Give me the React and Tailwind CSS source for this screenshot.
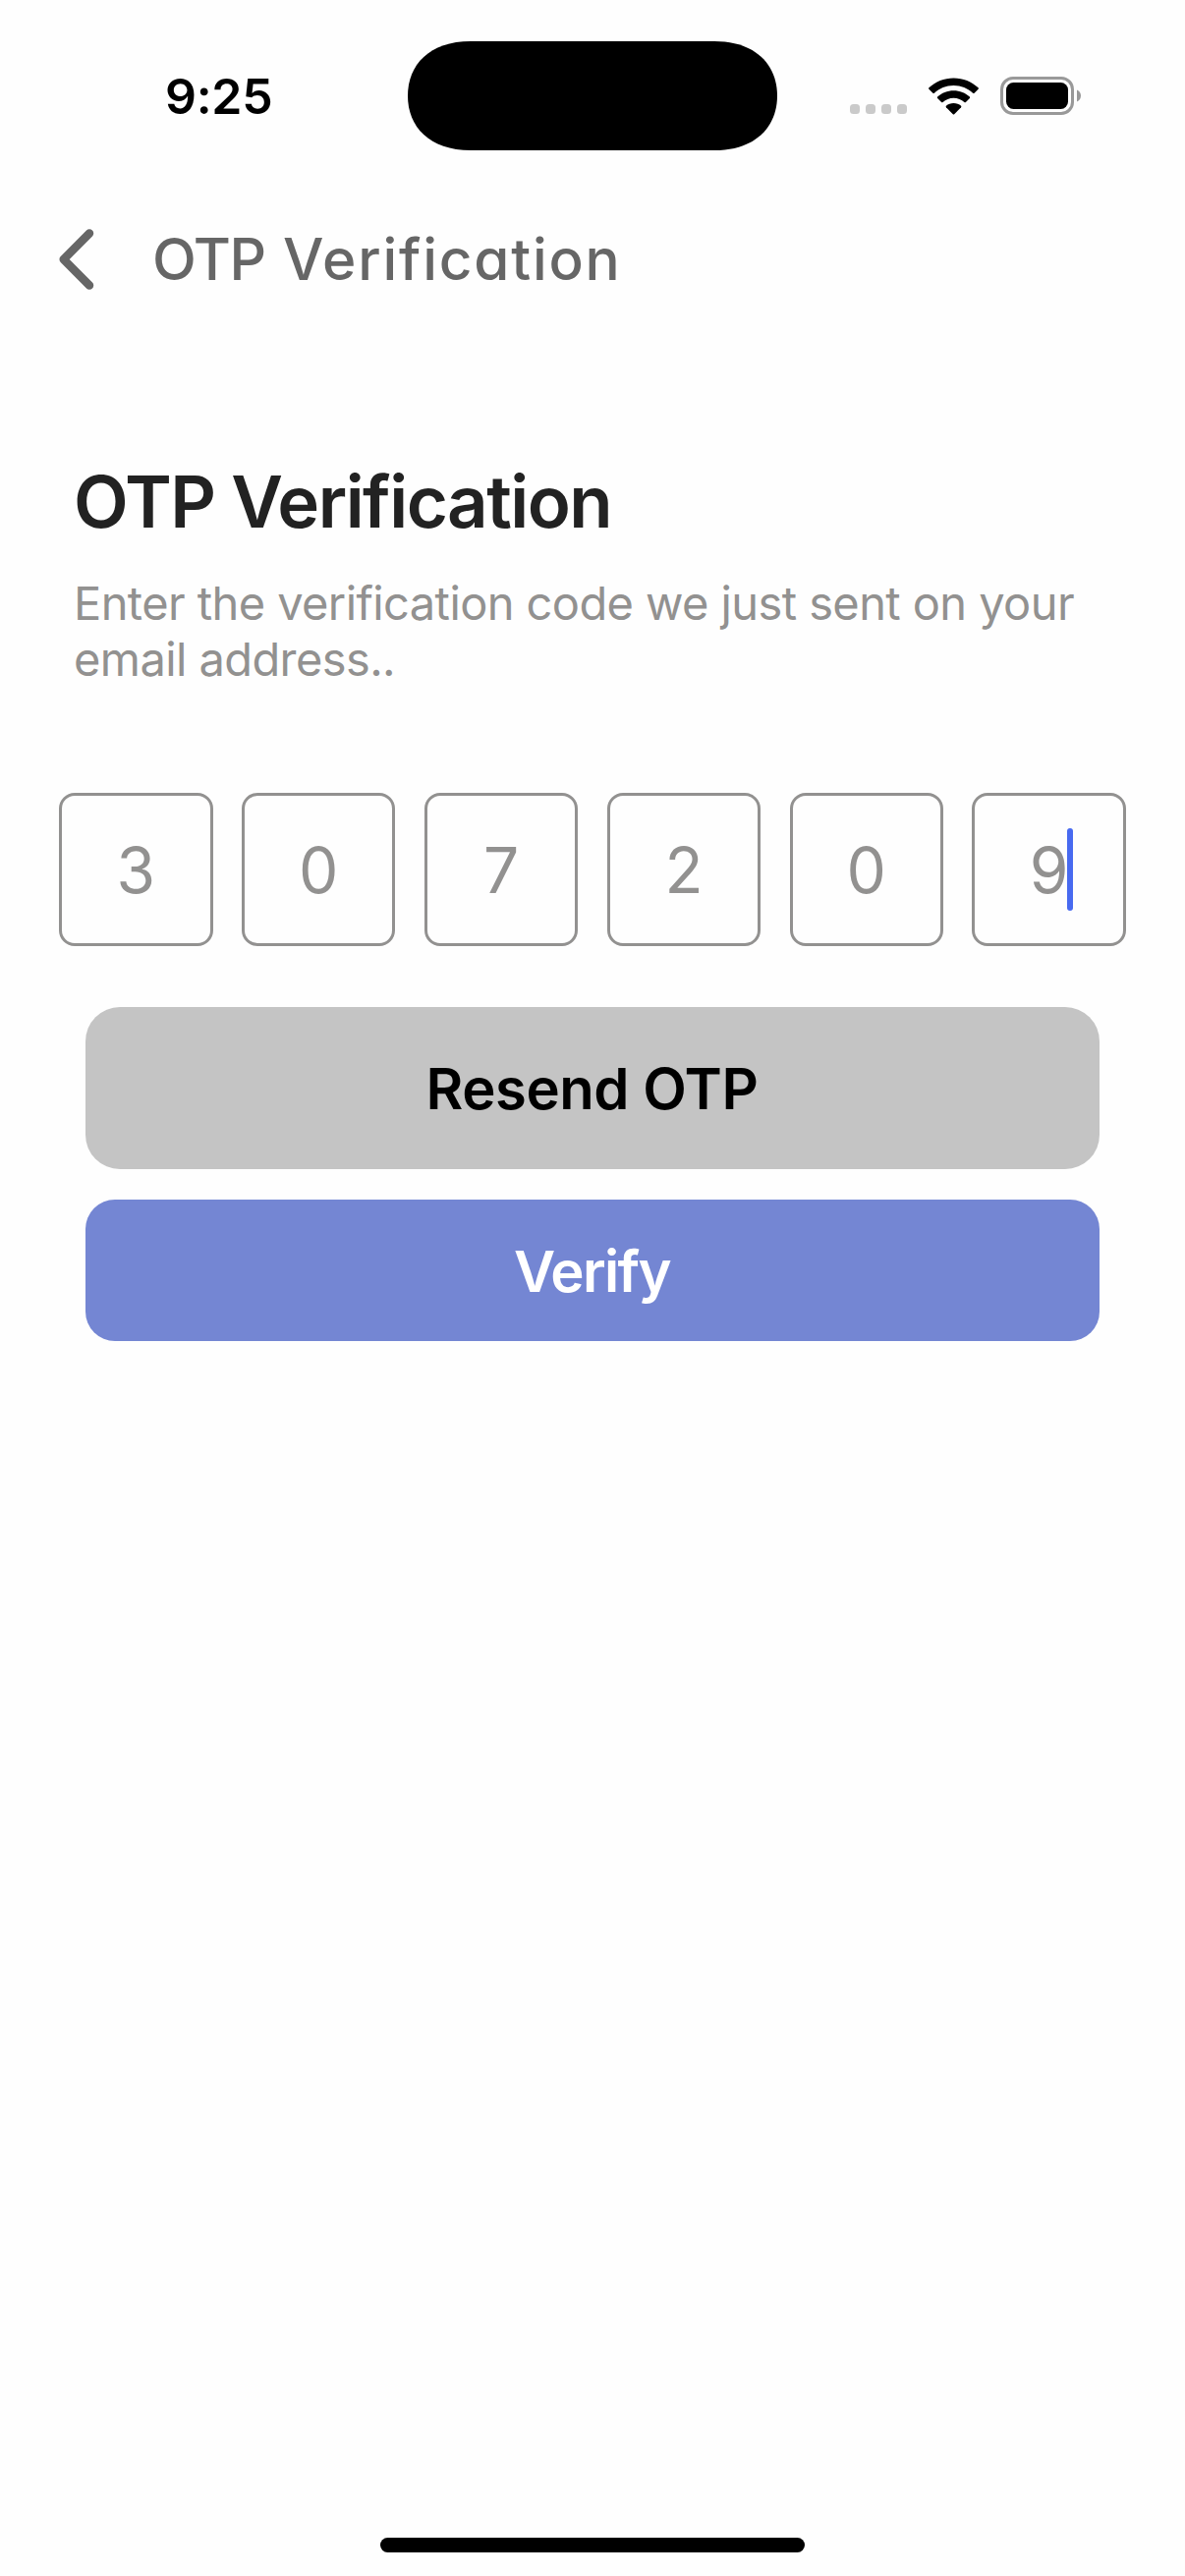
import React from "react";

const digits = ["3", "0", "7", "2", "0", "9"];

function Island() {
  return (
    <svg className="h-[111px] w-[376px]" viewBox="0 0 376 111" aria-hidden="true">
      <path d="M0 55.5C0 24 22 0 64 0H312C354 0 376 24 376 55.5S354 111 312 111H64C22 111 0 87 0 55.5Z" fill="#000" />
    </svg>
  );
}

function Wifi() {
  return (
    <svg className="h-[38px] w-[51px]" viewBox="0 0 51 38" aria-hidden="true">
      <path d="M25.5 0.5C35.2 0.5 44 4.2 50.6 10.3Q51.2 11 50.6 11.7L46.6 15.7Q45.8 16.3 45.1 15.7C40 10.9 33.1 8 25.5 8S11 10.9 5.9 15.7Q5.2 16.3 4.4 15.7L0.4 11.7Q-0.2 11 0.4 10.3C7 4.2 15.8 0.5 25.5 0.5Z" />
      <path d="M25.5 13.3C31.8 13.3 37.6 15.7 41.9 19.6Q42.5 20.3 41.9 21L37.9 25Q37.2 25.6 36.4 25C33.5 22.4 29.7 20.8 25.5 20.8S17.5 22.4 14.6 25Q13.8 25.6 13.1 25L9.1 21Q8.5 20.3 9.1 19.6C13.4 15.7 19.2 13.3 25.5 13.3Z" />
      <path d="M25.5 26C28.4 26 31.1 27 33.1 28.8Q33.7 29.5 33.1 30.2L26.2 37.2Q25.5 37.8 24.8 37.2L17.9 30.2Q17.3 29.5 17.9 28.8C19.9 27 22.6 26 25.5 26Z" />
    </svg>
  );
}

function Battery() {
  return (
    <svg className="h-[39px] w-[83px]" viewBox="0 0 83 39" aria-hidden="true">
      <rect x="1.5" y="1.5" width="72" height="36" rx="11.5" fill="none" stroke="#999" strokeWidth="3" />
      <rect x="6" y="6" width="63" height="27" rx="7.5" />
      <path d="M78 13.5C80.4 14.5 82 16.8 82 19.5S80.4 24.5 78 25.5Z" fill="#999" />
    </svg>
  );
}

function StatusBar() {
  return (
    <div className="grid h-[194px] grid-cols-[415px_1fr_415px] items-center text-black">
      <span className="pt-[2px] pl-[168px] text-[50px] leading-none font-semibold tracking-[-0.3px]">9:25</span>
      <Island />
      <div className="flex items-center pt-px pl-[74px]">
        <div className="flex gap-[6px] pt-[27px]">
          {[0, 1, 2, 3].map((n) => (
            <span key={n} className="size-[10px] rounded-[3.5px] bg-[#cacaca]" />
          ))}
        </div>
        <div className="ml-[22px]">
          <Wifi />
        </div>
        <div className="ml-[22px]">
          <Battery />
        </div>
      </div>
    </div>
  );
}

export default function App() {
  return (
    <div className="flex h-[2622px] w-[1206px] flex-col overflow-hidden bg-[#fefefe] font-['Inter',sans-serif]">
      <StatusBar />

      <header className="flex h-[140px] items-center pl-[60px] text-[#666]">
        <svg className="h-[62px] w-[36px] shrink-0" viewBox="0 0 36 62" fill="none" aria-label="Back">
          <path d="M31 4.5L4.7 31L31 57.5" stroke="currentColor" strokeWidth="8.5" strokeLinecap="round" strokeLinejoin="round" />
        </svg>
        <span className="ml-[59px] text-[58.5px] leading-none font-medium tracking-[1.8px] [font-feature-settings:'cv11']">
          <span className="mr-[1px] tracking-[-1.4px]">OTP</span> Verification
        </span>
      </header>

      <main className="flex flex-1 flex-col">
        <h1 className="mt-[133px] ml-[75px] text-[72.5px] leading-[88px] font-semibold tracking-[-1.52px] text-[#222]">OTP Verification</h1>
        <p className="mt-[30px] ml-[75px] w-[1056px] text-[47px] leading-[57px] tracking-[-0.59px] text-[#929190]">
          Enter the verification code we just sent on your email address..
        </p>

        <div className="mx-[60px] mt-[108px] flex justify-between">
          {digits.map((d, i) => (
            <div key={i} className="flex h-[156px] w-[156.6px] items-center justify-center rounded-[16px] border-3 border-[#929190] pt-[2px] text-[64px] leading-none text-[#929190]">
              <span className="relative">
                {d}
                {i === digits.length - 1 && (
                  <span className="absolute top-[-11px] left-[calc(100%-2px)] h-[84px] w-[6px] rounded-full bg-[#486af0]" />
                )}
              </span>
            </div>
          ))}
        </div>

        <div className="mx-[87px] mt-[62px] flex flex-col gap-[31px] text-[58px] leading-none font-semibold">
          <button className="h-[165px] rounded-[35px] bg-[#c4c4c4] pr-[1px] tracking-[-0.44px] text-black">Resend OTP</button>
          <button className="h-[144px] rounded-[30px] bg-[#7486d3] pt-[2px] pr-[1px] tracking-[-1.6px] text-white">Verify</button>
        </div>
      </main>

      <div className="mb-[24px] h-[15px] w-[432px] self-center rounded-full bg-black" />
    </div>
  );
}
